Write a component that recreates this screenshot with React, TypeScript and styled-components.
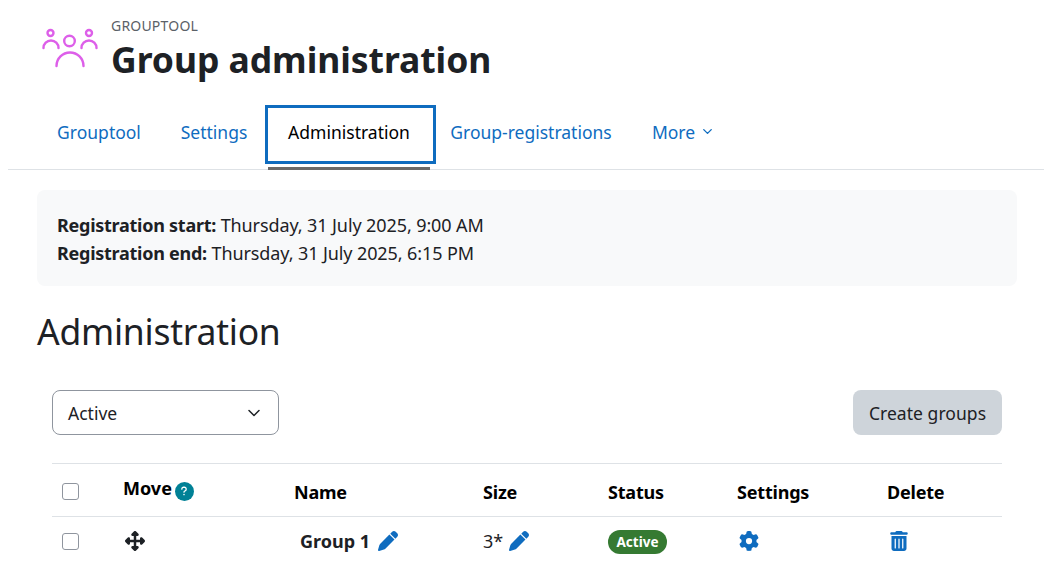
import React from "react";
import styled, { createGlobalStyle } from "styled-components";
import { FaUpDownLeftRight, FaGear, FaPen, FaTrashCan, FaQuestion } from "react-icons/fa6";
import { ChevronDown } from "lucide-react";

const Global = createGlobalStyle`
  html, body { margin: 0; height: 564px; overflow: hidden; background: #fff; }
  body { font-family: "Noto Sans", "Open Sans", "Liberation Sans", sans-serif; color: #1d2125; }
`;
const Header = styled.header`
  display: flex;
  align-items: flex-start;
  gap: 12px;
  padding: 16px 0 0 41px;
  height: 105px;
  box-sizing: border-box;
`;
const Logo = styled.svg`
  width: 58px;
  height: 42px;
  margin-top: 12px;
  flex: none;
`;
const Titles = styled.div`display: flex; flex-direction: column;`;
const Eyebrow = styled.div`
  font-size: 14px;
  line-height: 20px;
  color: #5b6167;
  letter-spacing: 0.2px;
`;
const Title = styled.h1`
  margin: 0;
  font-size: 35.5px;
  line-height: 46px;
  font-weight: 700;
  letter-spacing: -0.05px;
  color: #1d2125;
`;
const Tabs = styled.nav`
  display: flex;
  height: 64px;
  margin: 0 0 0 8px;
  padding: 0 0 0 27px;
  border-bottom: 1px solid #dee2e6;
  align-items: flex-start;
`;
const Tab = styled.a<{ $w: number; $active?: boolean }>`
  position: relative;
  display: flex;
  align-items: center;
  justify-content: center;
  gap: 5px;
  width: ${p => p.$w}px;
  height: 59px;
  padding-bottom: 6px;
  box-sizing: border-box;
  font-size: 17.5px;
  color: ${p => (p.$active ? "#000" : "#0f6cbf")};
  ${p => p.$active && `
    border: 3px solid #0f6cbf;
    padding-right: 3px;
    &::after {
      content: "";
      position: absolute;
      left: 0; right: 3px; bottom: -9px;
      height: 3px;
      background: #6a6a6a;
    }
  `}
`;
const Content = styled.main`
  padding: 20px 27px 0 37px;
`;
const Info = styled.div`
  background: #f8f9fa;
  border-radius: 8px;
  height: 96px;
  box-sizing: border-box;
  padding: 21px 20px;
  font-size: 18px;
  line-height: 28px;
  letter-spacing: -0.1px;
  color: #1d2125;
  b { font-weight: 700; letter-spacing: -0.26px; }
`;
const Heading = styled.h2`
  margin: 21px 0 0;
  font-size: 35.5px;
  line-height: 48px;
  font-weight: 400;
  letter-spacing: -0.25px;
  color: #1d2125;
`;
const Panel = styled.section`
  margin: 35px 15px 0;
`;
const Controls = styled.div`
  display: flex;
  justify-content: space-between;
  height: 45px;
  margin-bottom: 28px;
`;
const Select = styled.div`
  width: 227px;
  box-sizing: border-box;
  border: 1px solid #8f959e;
  border-radius: 8px;
  display: flex;
  align-items: center;
  justify-content: space-between;
  padding: 0 14px 0 15px;
  font-size: 17.5px;
  color: #1d2125;
`;
const Button = styled.div`
  width: 149px;
  border-radius: 8px;
  background: #ced4da;
  display: flex;
  align-items: center;
  justify-content: center;
  font-size: 17.5px;
  letter-spacing: 0.05px;
  color: #1d2125;
`;
const Row = styled.div<{ $h: number }>`
  display: grid;
  grid-template-columns: 71px 171px 189px 125px 129px 150px 115px;
  height: ${p => p.$h}px;
  border-top: 1px solid #dee2e6;
  box-sizing: border-box;
  align-items: center;
`;
const Check = styled.span<{ $drop?: number }>`
  display: block;
  width: 15px;
  height: 15px;
  margin-left: 10px;
  margin-top: ${p => p.$drop ?? 0}px;
  border: 1px solid #8f959e;
  border-radius: 3px;
  background: #fff;
`;
const Th = styled.div`
  font-size: 18px;
  font-weight: 700;
  letter-spacing: -0.2px;
  color: #000;
  padding-top: 4px;
`;
const MoveTh = styled(Th)`
  display: flex;
  align-items: center;
  gap: 3px;
  padding-top: 0;
  margin-top: -4px;
  letter-spacing: 0;
`;
const Help = styled.span`
  display: inline-flex;
  align-items: center;
  justify-content: center;
  width: 19px;
  height: 19px;
  border-radius: 50%;
  background: #008196;
  color: #fff;
  margin-top: 6px;
  font-size: 10px;
`;
const Cell = styled.div<{ $gap?: number }>`
  display: flex;
  align-items: center;
  gap: ${p => p.$gap ?? 8}px;
  font-size: 18px;
  color: #1d2125;
  padding-bottom: 2px;
`;
const NameCell = styled(Cell)`
  font-weight: 700;
  padding-left: 6px;
`;
const Badge = styled.span`
  display: inline-flex;
  align-items: center;
  justify-content: center;
  width: 59px;
  height: 24px;
  margin-top: 2px;
  border-radius: 12px;
  background: #357a32;
  color: #fff;
  font-size: 13.5px;
  font-weight: 700;
`;
const Blue = styled.span<{ $inset?: number }>`
  color: #0f6cbf;
  display: inline-flex;
  font-size: 20px;
  margin-left: ${p => p.$inset ?? 0}px;
`;
const Dark = styled.span`
  color: #1d2125;
  display: inline-flex;
  font-size: 20px;
  margin-left: 2px;
`;

export default function App() {
  return (
    <>
      <Global />
      <Header>
        <Logo viewBox="0 0 58 42" fill="none" stroke="#dd5fe9" strokeWidth="2.4" strokeLinecap="round">
          <circle cx="9.5" cy="5" r="3" />
          <path d="M2.5 20a7.5 7.5 0 0 1 15 0" />
          <circle cx="28.5" cy="13" r="5.3" />
          <path d="M15.5 38a13.5 13.5 0 0 1 27 0" />
          <circle cx="48" cy="5" r="3" />
          <path d="M40.5 20a7.5 7.5 0 0 1 15 0" />
        </Logo>
        <Titles>
          <Eyebrow>GROUPTOOL</Eyebrow>
          <Title>Group administration</Title>
        </Titles>
      </Header>
      <Tabs>
        <Tab $w={128}>Grouptool</Tab>
        <Tab $w={102}>Settings</Tab>
        <Tab $w={171} $active>Administration</Tab>
        <Tab $w={190}>Group-registrations</Tab>
        <Tab $w={115}>More <ChevronDown size={15} strokeWidth={2.2} /></Tab>
      </Tabs>
      <Content>
        <Info>
          <div><b>Registration start:</b> Thursday, 31 July 2025, 9:00 AM</div>
          <div><b>Registration end:</b> Thursday, 31 July 2025, 6:15 PM</div>
        </Info>
        <Heading>Administration</Heading>
        <Panel>
          <Controls>
            <Select>Active <ChevronDown size={20} strokeWidth={1.8} /></Select>
            <Button>Create groups</Button>
          </Controls>
          <Row $h={53}>
            <Check $drop={2} />
            <MoveTh>Move <Help><FaQuestion /></Help></MoveTh>
            <Th>Name</Th>
            <Th>Size</Th>
            <Th>Status</Th>
            <Th>Settings</Th>
            <Th>Delete</Th>
          </Row>
          <Row $h={50}>
            <Check />
            <Cell><Dark><FaUpDownLeftRight /></Dark></Cell>
            <NameCell>Group 1 <Blue><FaPen /></Blue></NameCell>
            <Cell $gap={6}>3* <Blue><FaPen /></Blue></Cell>
            <Cell><Badge>Active</Badge></Cell>
            <Cell><Blue $inset={2}><FaGear /></Blue></Cell>
            <Cell><Blue $inset={2}><FaTrashCan /></Blue></Cell>
          </Row>
        </Panel>
      </Content>
    </>
  );
}
